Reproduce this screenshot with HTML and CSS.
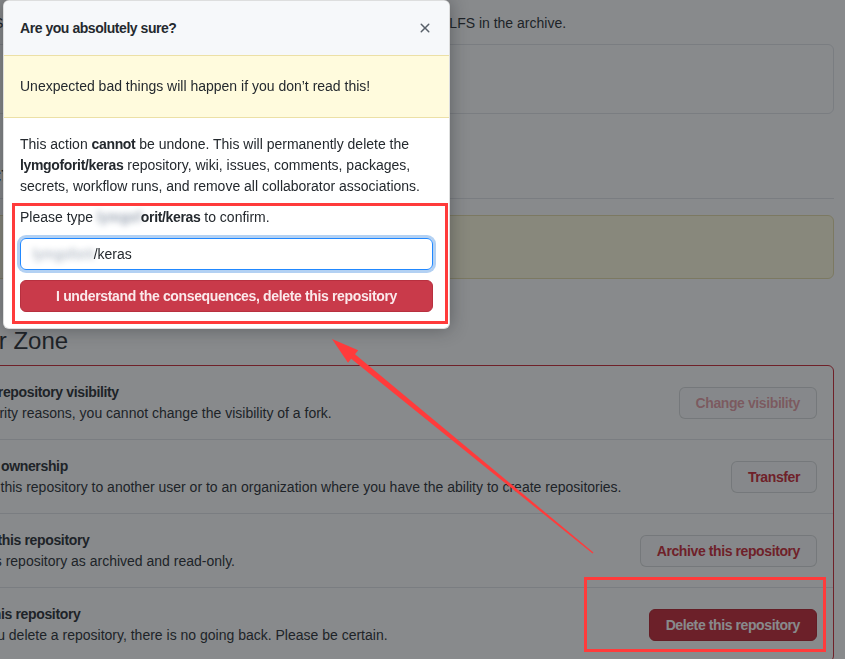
FILE: index.html
```html
<!DOCTYPE html>
<html>
<head>
<title>Settings - Danger Zone</title>
<link rel="stylesheet" href="styles.css">
</head>
<body>

<div class="page">
	<p class="lead">Git LFS objects will be included in code archives, with any files stored using Git LFS in the archive.</p>
	<div class="form-box"></div>

	<h2 class="subhead">Interaction limits</h2>
	<div class="flash-warn"></div>

	<h2 class="danger-title">Danger Zone</h2>
	<div class="danger-box">
		<div class="danger-row">
			<div class="row-text">
				<strong>Change repository visibility</strong>
				<p>For security reasons, you cannot change the visibility of a fork.</p>
			</div>
			<button class="btn btn-danger" disabled>Change visibility</button>
		</div>
		<div class="danger-row">
			<div class="row-text">
				<strong>Transfer ownership</strong>
				<p>Transfer this repository to another user or to an organization where you have the ability to create repositories.</p>
			</div>
			<button class="btn btn-danger">Transfer</button>
		</div>
		<div class="danger-row">
			<div class="row-text">
				<strong>Archive this repository</strong>
				<p>Mark this repository as archived and read-only.</p>
			</div>
			<button class="btn btn-danger">Archive this repository</button>
		</div>
		<div class="danger-row">
			<div class="row-text">
				<strong>Delete this repository</strong>
				<p>Once you delete a repository, there is no going back. Please be certain.</p>
			</div>
			<button class="btn btn-danger btn-solid">Delete this repository</button>
		</div>
	</div>
</div>

<div class="backdrop"></div>

<div class="modal">
	<div class="modal-header">
		<h3 class="modal-title">Are you absolutely sure?</h3>
		<button class="close-btn" aria-label="Close">
			<svg width="16" height="16" viewBox="0 0 16 16"><path fill="currentColor" d="M3.72 3.72a.75.75 0 0 1 1.06 0L8 6.94l3.22-3.22a.75.75 0 1 1 1.06 1.06L9.06 8l3.22 3.22a.75.75 0 1 1-1.06 1.06L8 9.06l-3.22 3.22a.75.75 0 0 1-1.06-1.06L6.94 8 3.72 4.78a.75.75 0 0 1 0-1.06z"/></svg>
		</button>
	</div>
	<div class="modal-flash">Unexpected bad things will happen if you don’t read this!</div>
	<div class="modal-body">
		<p>This action <strong>cannot</strong> be undone. This will permanently delete the <strong>lymgoforit/keras</strong> repository, wiki, issues, comments, packages, secrets, workflow runs, and remove all collaborator associations.</p>
		<p>Please type <strong><span class="smudge">lymgof</span>orit/keras</strong> to confirm.</p>
		<div class="form-control"><span class="smudge">lymgoforit</span>/keras</div>
		<button class="btn-confirm">I understand the consequences, delete this repository</button>
	</div>
</div>

<!-- annotations drawn over the screenshot -->
<div class="mark mark-form"></div>
<div class="mark mark-delete"></div>
<svg class="arrow" width="845" height="659" viewBox="0 0 845 659">
	<polygon fill="#ff3b3b" points="332,339 358.2,350.3 355,354.2 593.4,552.5 592.6,553.5 351.2,358.8 348,362.7"/>
</svg>

</body>
</html>
```

FILE: styles.css
```css
html, body {
	margin: 0;
	padding: 0;
}

body {
	width: 845px;
	height: 659px;
	overflow: hidden;
	background: #fff;
	color: #24292e;
	font-family: "Liberation Sans", Arial, sans-serif;
	font-size: 14px;
	line-height: 21px;
}

strong {
	letter-spacing: -0.35px;
}

/* page behind the dialog */
.page {
	margin-left: -72px;
	width: 906px;
	padding-top: 13px;
}

.lead {
	margin: 0;
	padding-left: 28px;
	white-space: nowrap;
}

.form-box {
	margin-top: 10px;
	height: 68px;
	border: 1px solid #e1e4e8;
	border-radius: 6px;
}

.subhead {
	margin: 46px 0 0;
	padding-bottom: 8px;
	font-size: 24px;
	line-height: 30px;
	font-weight: 400;
	border-bottom: 1px solid #e1e4e8;
}

.flash-warn {
	margin-top: 16px;
	height: 62px;
	background: #fffbdd;
	border: 1px solid #e6dca8;
	border-radius: 6px;
}

.danger-title {
	margin: 47px 0 9px;
	font-size: 24px;
	line-height: 30px;
	font-weight: 400;
}

.danger-box {
	border: 1px solid #cb2431;
	border-radius: 6px;
}

.danger-row {
	display: flex;
	align-items: center;
	justify-content: space-between;
	padding: 16px;
}

.danger-row + .danger-row {
	border-top: 1px solid #e1e4e8;
}

.row-text strong {
	display: block;
	font-weight: 700;
}

.row-text p {
	margin: 0;
	line-height: 20px;
}

.btn {
	font-family: inherit;
	font-size: 14px;
	font-weight: 700;
	letter-spacing: -0.4px;
	line-height: 20px;
	padding: 5px 16px;
	border-radius: 6px;
	white-space: nowrap;
}

.btn-danger {
	color: #cb2431;
	background: #fafbfc;
	border: 1px solid rgba(27,31,35,0.15);
}

.btn-danger:disabled {
	color: rgba(203,36,49,0.45);
}

.btn-solid {
	color: #fff;
	background: #c42230;
	border-color: #b31d28;
}

.backdrop {
	position: fixed;
	top: 0;
	left: 0;
	right: 0;
	bottom: 0;
	background: rgba(27,31,35,0.52);
}

/* dialog */
.modal {
	position: absolute;
	left: 3px;
	top: 0;
	width: 445px;
	background: #fff;
	border: 1px solid rgba(27,31,35,0.15);
	border-radius: 6px;
	box-shadow: 0 0 18px rgba(27,31,35,0.4);
	overflow: hidden;
}

.modal-header {
	display: flex;
	align-items: center;
	justify-content: space-between;
	padding: 16px;
	background: #f6f8fa;
}

.modal-title {
	margin: 0;
	font-size: 14px;
	line-height: 22px;
	font-weight: 700;
	letter-spacing: -0.45px;
}

.close-btn {
	padding: 0;
	border: 0;
	background: none;
	color: #586069;
	display: flex;
}

.modal-flash {
	padding: 20px 16px;
	background: #fffbdd;
	border-top: 1px solid #ece0a6;
	border-bottom: 1px solid #ece0a6;
}

.modal-body {
	padding: 16px;
}

.modal-body p {
	margin: 0 0 10px;
}

.smudge {
	color: transparent;
	text-shadow: 0 0 6px rgba(150,160,175,1);
}

.form-control {
	height: 32px;
	box-sizing: border-box;
	padding: 5px 12px;
	line-height: 20px;
	border: 1px solid #2188ff;
	border-radius: 6px;
	box-shadow: 0 0 0 3px rgba(3,102,214,0.3);
}

.btn-confirm {
	display: block;
	width: 100%;
	margin-top: 10px;
	height: 32px;
	font-family: inherit;
	font-size: 14px;
	font-weight: 700;
	letter-spacing: -0.35px;
	color: #fbe9eb;
	background: #c93a4a;
	border: 1px solid #b8303f;
	border-radius: 6px;
}

/* red annotation marks */
.mark {
	position: absolute;
	box-sizing: border-box;
	border: 3px solid #ff3b3b;
}

.mark-form {
	left: 12px;
	top: 203px;
	width: 436px;
	height: 121px;
}

.mark-delete {
	left: 584px;
	top: 577px;
	width: 242px;
	height: 75px;
}

.arrow {
	position: absolute;
	left: 0;
	top: 0;
}
```
